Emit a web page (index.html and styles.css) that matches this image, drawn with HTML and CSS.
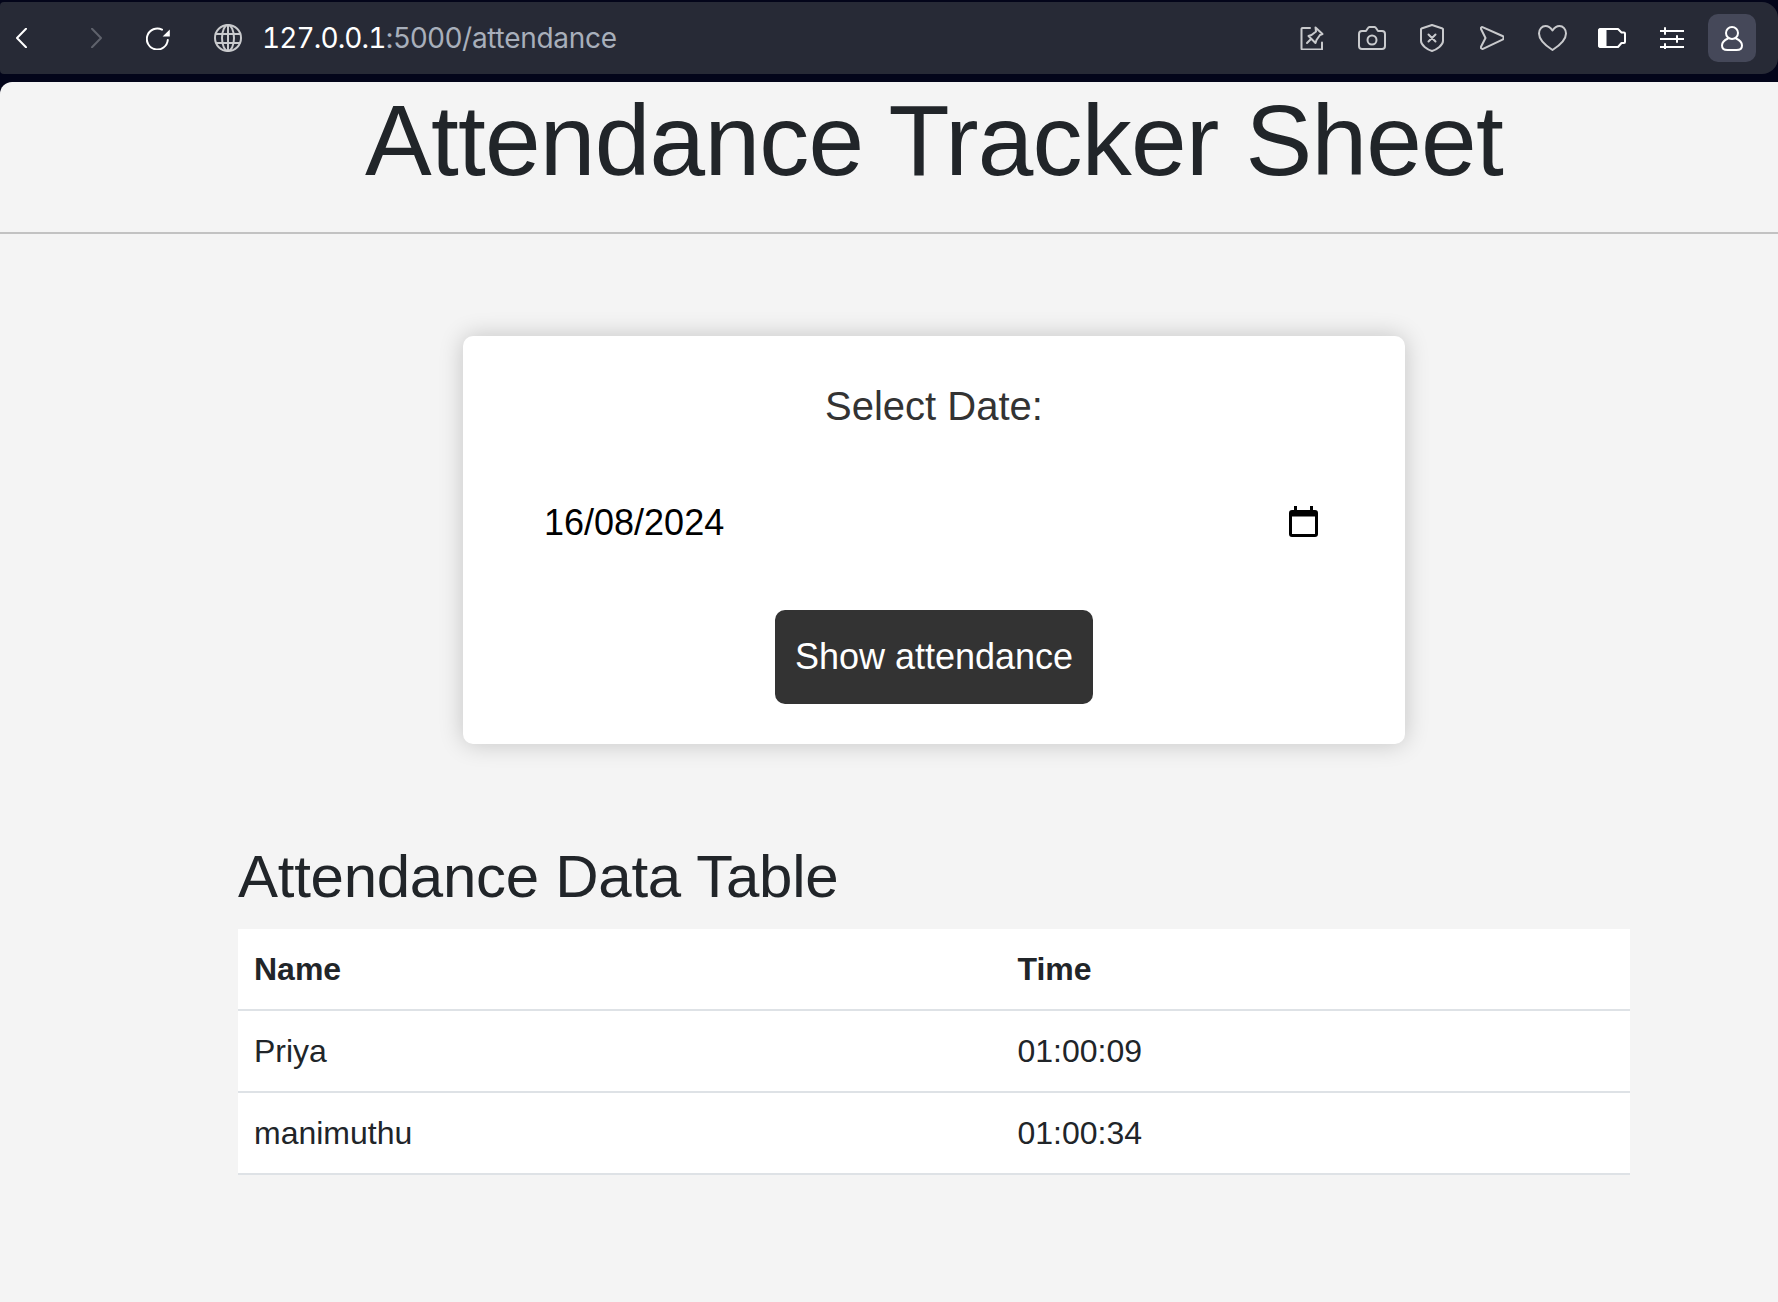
FILE: index.html
```html
<!DOCTYPE html>
<html lang="en">
<head>
    <meta charset="UTF-8">
    <meta name="viewport" content="width=device-width, initial-scale=1.0">
    <title>Attendance Tracker Sheet</title>
    <link rel="stylesheet" href="styles.css">
</head>
<body>
    <div class="browser-bar">
        <svg class="nav-back" width="11" height="20" viewBox="0 0 11 20"><path d="M10 .7 1 10l9 9.3"/></svg>
        <svg class="nav-forward" width="11" height="20" viewBox="0 0 11 20"><path d="M1 .7 10 10l-9 9.300"/></svg>
        <svg class="nav-reload" width="24" height="23" viewBox="0 0 24 23">
            <path d="M21.800 13A10.500 10.500 0 1 1 16 2.600"/>
            <path class="solid" d="M23.800 2.400V9.400H16.600Z"/>
        </svg>
        <svg class="nav-globe" width="28" height="28" viewBox="0 0 28 28">
            <circle cx="14" cy="14" r="13"/>
            <ellipse cx="14" cy="14" rx="6" ry="13"/>
            <path d="M14 1v26M2.500 10h23M2.500 19h23"/>
        </svg>
        <div class="url"><span class="url-host">127.0.0.1</span>:5000/attendance</div>

        <div class="bar-actions">
            <div class="action">
                <svg width="24" height="24" viewBox="0 0 24 24">
                    <path d="M10 2H2.500a1 1 0 0 0-1 1v19.500a1 1 0 0 0 1 1h19.500v-7"/>
                    <path d="M15.500 1.500l7 6.500-2.500 1-3.500 5-1 3-7-7 3-1 4.500-3.500zM11 13l-4 4"/>
                </svg>
            </div>
            <div class="action">
                <svg width="28" height="24" viewBox="0 0 28 24">
                    <path d="M4 5h4l2-3a2 2 0 0 1 1.500-1h5a2 2 0 0 1 1.500 1l2 3h4a3 3 0 0 1 3 3v12a3 3 0 0 1-3 3H4a3 3 0 0 1-3-3V8a3 3 0 0 1 3-3z"/>
                    <circle cx="14" cy="14" r="4.500"/>
                </svg>
            </div>
            <div class="action">
                <svg width="24" height="28" viewBox="0 0 24 28">
                    <path d="M12 1l10.500 3.500a1 1 0 0 1 .5 1V17c0 4-6 8.500-11 10C7 25.500 1 21 1 17V5.500a1 1 0 0 1 .5-1z"/>
                    <path d="M8.500 10.500l7 7M15.500 10.500l-7 7"/>
                </svg>
            </div>
            <div class="action">
                <svg width="24" height="24" viewBox="0 0 24 24">
                    <path d="M2.500 1.200 22.500 10a2 2 0 0 1 0 3.600L3 22.800c-1.500.5-2.500-.8-2-2L5.500 12 1 3c-.5-1 .5-2.200 1.500-1.800z"/>
                </svg>
            </div>
            <div class="action">
                <svg width="29" height="26" viewBox="0 0 29 26">
                    <path d="M14.500 5.500C12.500 2.500 10 1 7.500 1 4 1 1 4 1 8.500c0 7 8 13 13.500 16.500C20 21.500 28 15.500 28 8.500 28 4 25 1 21.500 1c-2.500 0-5 1.500-7 4.500z"/>
                </svg>
            </div>
            <div class="action">
                <svg class="icon-white" width="28" height="20" viewBox="0 0 28 20">
                    <path d="M3 1h17l3.500 3.500h2.500a1 1 0 0 1 1 1V14a1 1 0 0 1-1 1h-2.500L20 19H3a2 2 0 0 1-2-2V3a2 2 0 0 1 2-2z"/>
                    <path class="solid" d="M3 0h5.500v20H3a3 3 0 0 1-3-3V3a3 3 0 0 1 3-3z"/>
                </svg>
            </div>
            <div class="action">
                <svg class="icon-white" width="24" height="22" viewBox="0 0 24 22">
                    <path d="M0 4h24M0 12h24M0 20h24M5 1v6M17 9v6M5 17v5"/>
                </svg>
            </div>
            <div class="action">
                <div class="user-box">
                    <svg class="icon-white" width="22" height="25" viewBox="0 0 22 25">
                        <circle cx="11" cy="7" r="6"/>
                        <path d="M7 12.500C3.500 14 1 16.500 1 19.500 1 22.500 3.500 24 6.500 24h9c3 0 5.500-1.500 5.500-4.500 0-3-2.500-5.500-6-7"/>
                    </svg>
                </div>
            </div>
        </div>
    </div>

    <div class="page">
        <header class="page-header">
            <h1>Attendance Tracker Sheet</h1>
        </header>

        <main class="content">
            <form class="date-card">
                <label class="date-label">Select Date:</label>
                <div class="date-field">
                    <span>16/08/2024</span>
                    <svg width="29" height="31" viewBox="0 0 29 31">
                        <path class="solid" d="M5 0h3v4H21V0h3v4h2a3 3 0 0 1 3 3v21a3 3 0 0 1-3 3H3a3 3 0 0 1-3-3V7a3 3 0 0 1 3-3h2zM3 10.500V28h23V10.500z"/>
                    </svg>
                </div>
                <button type="button" class="show-btn">Show attendance</button>
            </form>

            <section class="table-section">
                <h2>Attendance Data Table</h2>
                <table class="data-table">
                    <colgroup>
                        <col class="col-name">
                        <col>
                    </colgroup>
                    <thead>
                        <tr>
                            <th>Name</th>
                            <th>Time</th>
                        </tr>
                    </thead>
                    <tbody>
                        <tr>
                            <td>Priya</td>
                            <td>01:00:09</td>
                        </tr>
                        <tr>
                            <td>manimuthu</td>
                            <td>01:00:34</td>
                        </tr>
                    </tbody>
                </table>
            </section>
        </main>
    </div>
</body>
</html>
```

FILE: styles.css
```css
* {
    margin: 0;
    padding: 0;
    box-sizing: border-box;
}

body {
    background: #03051a;
    padding-top: 2px;
    font-family: "Liberation Sans", Arial, sans-serif;
    color: #212529;
}

/* browser chrome */
.browser-bar {
    height: 72px;
    margin-bottom: 8px;
    padding-right: 16px;
    display: flex;
    align-items: center;
    background: #272a36;
    border-radius: 4px 16px 16px 4px;
}

.browser-bar svg {
    flex: none;
    fill: none;
    stroke: #c9cacd;
    stroke-width: 2;
    stroke-linecap: round;
    stroke-linejoin: round;
}

.browser-bar svg .solid,
.date-field svg .solid {
    stroke: none;
}

.browser-bar .solid {
    fill: #fff;
}

.browser-bar .icon-white {
    stroke: #fff;
}

.browser-bar .nav-back {
    margin-left: 16px;
    stroke: #fff;
}

.browser-bar .nav-forward {
    margin-left: 64px;
    stroke: #5f626c;
}

.browser-bar .nav-reload {
    margin-left: 44px;
    stroke: #fff;
}

.browser-bar .nav-globe {
    margin-left: 44px;
}

.url {
    margin-left: 20px;
    font-family: Inter, sans-serif;
    font-size: 28px;
    letter-spacing: -0.28px;
    color: #a8afbb;
    white-space: nowrap;
}

.url-host {
    color: #fff;
    font-variant-numeric: tabular-nums;
    letter-spacing: -0.9px;
}

.bar-actions {
    margin-left: auto;
    display: flex;
}

.action {
    width: 60px;
    height: 48px;
    display: flex;
    justify-content: center;
    align-items: center;
}

.user-box {
    width: 48px;
    height: 48px;
    display: flex;
    justify-content: center;
    align-items: center;
    background: #454859;
    border-radius: 10px;
}

/* page */
.page {
    min-height: 1220px;
    background: #f4f4f4;
    border-top-left-radius: 12px;
}

.page-header {
    height: 152px;
    padding: 8px 0 0 90px;
    border-bottom: 2px solid #c2c2c2;
    text-align: center;
}

h1 {
    font-size: 100px;
    font-weight: 400;
    line-height: 100px;
    letter-spacing: -0.76px;
}

.content {
    padding-left: 90px;
    display: flex;
    flex-direction: column;
    align-items: center;
}

.date-card {
    width: 942px;
    margin-top: 102px;
    padding: 40px;
    background: #fff;
    border-radius: 10px;
    box-shadow: 0 0 24px rgba(0, 0, 0, 0.2);
    display: flex;
    flex-direction: column;
    align-items: center;
}

.date-label {
    margin-bottom: 20px;
    font-size: 40px;
    line-height: 60px;
    color: #333;
}

.date-field {
    width: 100%;
    height: 134px;
    margin-bottom: 20px;
    padding: 0 47px 0 41px;
    display: flex;
    justify-content: space-between;
    align-items: center;
    font-size: 36px;
    line-height: 54px;
    color: #000;
}

.date-field svg {
    margin-bottom: 3px;
}

.show-btn {
    padding: 20px;
    background: #333;
    color: #fff;
    border: none;
    border-radius: 10px;
    font-family: inherit;
    font-size: 36px;
    line-height: 54px;
    cursor: pointer;
}

.table-section {
    width: 1392px;
    margin-top: 97px;
}

h2 {
    margin-bottom: 16px;
    font-size: 60px;
    font-weight: 400;
    line-height: 72px;
    letter-spacing: -0.27px;
}

.data-table {
    width: 100%;
    border-collapse: collapse;
    table-layout: fixed;
    background: #fff;
    font-size: 32px;
    line-height: 48px;
}

.col-name {
    width: 763.5px;
}

.data-table th,
.data-table td {
    padding: 16px;
    text-align: left;
    border-bottom: 2px solid #dee2e6;
}
```
